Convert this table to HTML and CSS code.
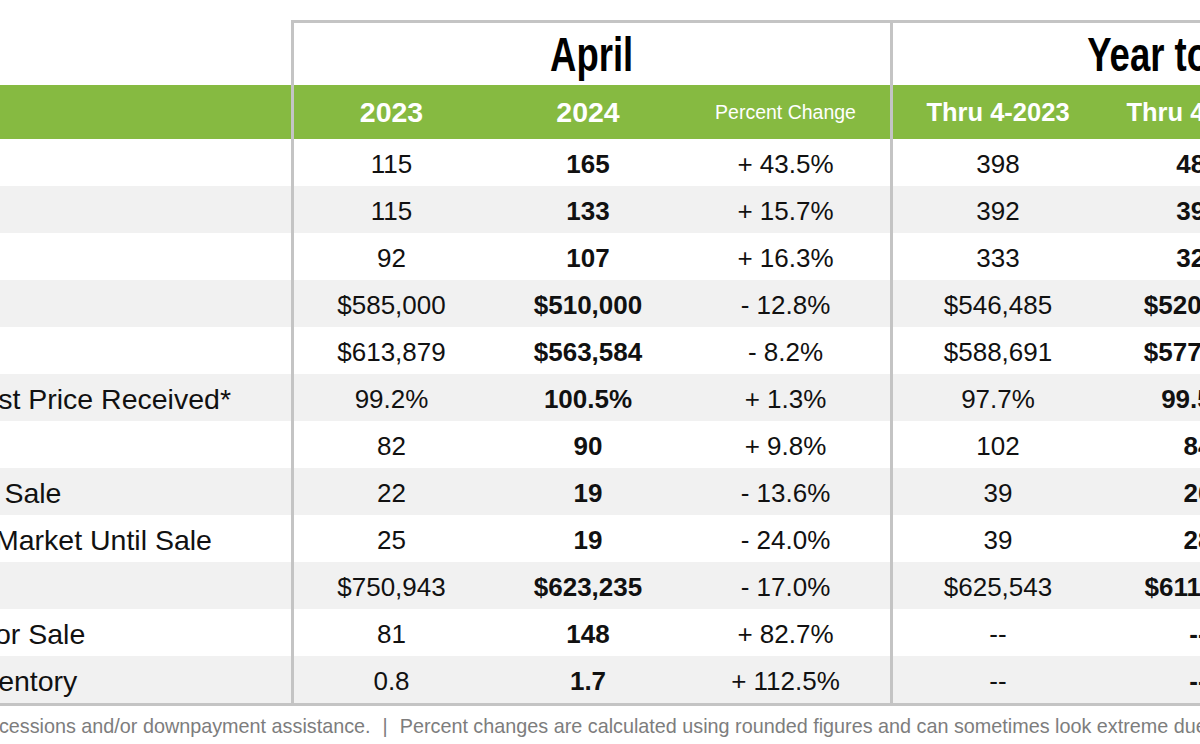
FILE: index.html
```html
<!DOCTYPE html>
<html lang="en">
<head>
<meta charset="utf-8">
<title>Local Market Update – April</title>
<link rel="stylesheet" href="styles.css">
</head>
<body>
<div class="report">
  <div class="groups">
    <div class="g-spacer"></div>
    <div class="g-title"><span class="cond">April</span></div>
    <div class="g-title"><span class="cond">Year to Date</span></div>
  </div>

  <div class="row head">
    <div class="lbl"></div>
    <div class="c c1 yr">2023</div>
    <div class="c yr">2024</div>
    <div class="c pct pc-h">Percent Change</div>
    <div class="c c4 thru">Thru 4-2023</div>
    <div class="c thru">Thru 4-2024</div>
    <div class="c pc-h">Percent Change</div>
  </div>

  <div class="row">
    <div class="lbl">New Listings</div>
    <div class="c c1">115</div><div class="c b">165</div><div class="c pct">+ 43.5%</div>
    <div class="c c4">398</div><div class="c b">485</div><div class="c">+ 21.9%</div>
  </div>
  <div class="row alt">
    <div class="lbl">Pending Sales</div>
    <div class="c c1">115</div><div class="c b">133</div><div class="c pct">+ 15.7%</div>
    <div class="c c4">392</div><div class="c b">397</div><div class="c">+ 1.3%</div>
  </div>
  <div class="row">
    <div class="lbl">Closed Sales</div>
    <div class="c c1">92</div><div class="c b">107</div><div class="c pct">+ 16.3%</div>
    <div class="c c4">333</div><div class="c b">326</div><div class="c">- 2.1%</div>
  </div>
  <div class="row alt">
    <div class="lbl">Median Sales Price*</div>
    <div class="c c1">$585,000</div><div class="c b">$510,000</div><div class="c pct">- 12.8%</div>
    <div class="c c4">$546,485</div><div class="c b">$520,000</div><div class="c">- 4.8%</div>
  </div>
  <div class="row">
    <div class="lbl">Avg. Sales Price*</div>
    <div class="c c1">$613,879</div><div class="c b">$563,584</div><div class="c pct">- 8.2%</div>
    <div class="c c4">$588,691</div><div class="c b">$577,226</div><div class="c">- 1.9%</div>
  </div>
  <div class="row alt">
    <div class="lbl">Percent of Original List Price Received*</div>
    <div class="c c1">99.2%</div><div class="c b">100.5%</div><div class="c pct">+ 1.3%</div>
    <div class="c c4">97.7%</div><div class="c b">99.5%</div><div class="c">+ 1.8%</div>
  </div>
  <div class="row">
    <div class="lbl">Affordability Index</div>
    <div class="c c1">82</div><div class="c b">90</div><div class="c pct">+ 9.8%</div>
    <div class="c c4">102</div><div class="c b">84</div><div class="c">- 17.6%</div>
  </div>
  <div class="row alt">
    <div class="lbl">Days on Market Until Sale</div>
    <div class="c c1">22</div><div class="c b">19</div><div class="c pct">- 13.6%</div>
    <div class="c c4">39</div><div class="c b">20</div><div class="c">- 48.7%</div>
  </div>
  <div class="row">
    <div class="lbl">Cumulative Days on Market Until Sale</div>
    <div class="c c1">25</div><div class="c b">19</div><div class="c pct">- 24.0%</div>
    <div class="c c4">39</div><div class="c b">28</div><div class="c">- 28.2%</div>
  </div>
  <div class="row alt">
    <div class="lbl">Average List Price</div>
    <div class="c c1">$750,943</div><div class="c b">$623,235</div><div class="c pct">- 17.0%</div>
    <div class="c c4">$625,543</div><div class="c b">$611,262</div><div class="c">- 2.3%</div>
  </div>
  <div class="row">
    <div class="lbl">Inventory of Homes for Sale</div>
    <div class="c c1">81</div><div class="c b">148</div><div class="c pct">+ 82.7%</div>
    <div class="c c4">--</div><div class="c b">--</div><div class="c">--</div>
  </div>
  <div class="row alt last">
    <div class="lbl">Months Supply of Inventory</div>
    <div class="c c1">0.8</div><div class="c b">1.7</div><div class="c pct">+ 112.5%</div>
    <div class="c c4">--</div><div class="c b">--</div><div class="c">--</div>
  </div>

  <p class="foot">* Does not account for sale concessions and/or downpayment assistance.<span class="sep">|</span>Percent changes are calculated using rounded figures and can sometimes look extreme due to small sample size.</p>
</div>
</body>
</html>
```

FILE: styles.css
```css
html, body {
  margin: 0;
  padding: 0;
  overflow: hidden;
  background: #ffffff;
}

body {
  font-family: "Liberation Sans", Arial, Helvetica, sans-serif;
  color: #111111;
}

.report {
  margin-left: -276px;
  width: 1769px;
}

.groups {
  display: grid;
  grid-template-columns: 567px 599px 603px;
  margin-top: 20px;
  height: 65px;
}

.g-title {
  box-sizing: border-box;
  border-top: 3px solid #c4c4c4;
  border-left: 3px solid #c4c4c4;
  display: flex;
  align-items: center;
  justify-content: center;
  padding-top: 2px;
}

.cond {
  display: inline-block;
  font-size: 48px;
  font-weight: 700;
  color: #000000;
  transform: scaleX(0.76);
  white-space: nowrap;
  line-height: 1;
}

.row {
  display: grid;
  grid-template-columns: 567px 198px 198px 203px 213px 190px 200px;
  height: 47px;
}

.row.alt {
  background: #f1f1f1;
}

.row.last {
  border-bottom: 3px solid #c4c4c4;
}

.row.head {
  background: #86ba41;
  height: 54px;
  color: #ffffff;
}

.lbl {
  box-sizing: border-box;
  padding-left: 8px;
  padding-top: 3px;
  font-size: 28.5px;
  white-space: nowrap;
  display: flex;
  align-items: center;
}

.c {
  box-sizing: border-box;
  padding-top: 3px;
  font-size: 26px;
  white-space: nowrap;
  display: flex;
  align-items: center;
  justify-content: center;
}

.c1, .c4 {
  border-left: 3px solid #c4c4c4;
}

.pct {
  padding-right: 6px;
}

.b {
  font-weight: 700;
}

.head .c {
  padding-top: 0;
  color: #ffffff;
}

.head .yr {
  font-size: 28.5px;
  font-weight: 700;
}

.head .thru {
  font-size: 25.5px;
  font-weight: 700;
}

.head .pc-h {
  font-size: 19.5px;
  font-weight: 400;
}

.foot {
  margin: 0;
  padding-top: 8px;
  padding-left: 0;
  font-size: 19.8px;
  line-height: 24px;
  color: #7d7d7d;
  white-space: nowrap;
}

.sep {
  margin: 0 12px;
}
```
